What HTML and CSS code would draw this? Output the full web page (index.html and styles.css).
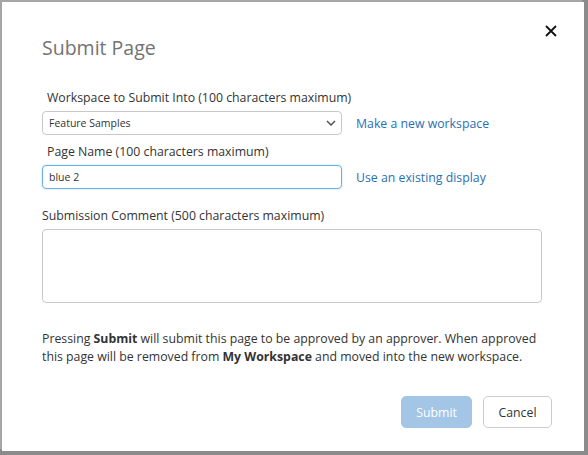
FILE: index.html
```html
<!DOCTYPE html>
<html>
<head>
<meta charset="utf-8">
<link rel="stylesheet" href="styles.css">
</head>
<body>
<div class="backdrop-text">| Location</div>
<div class="dialog">
  <button class="close" aria-label="Close">
    <svg width="12" height="12" viewBox="0 0 12 12"><path d="M1 1 L11 11 M11 1 L1 11" stroke="#111" stroke-width="1.8" fill="none"/></svg>
  </button>
  <h1 class="title">Submit Page</h1>

  <div class="field first">
    <div class="label indent">Workspace to Submit Into (100 characters maximum)</div>
    <div class="row">
      <div class="select">
        <span>Feature Samples</span>
        <svg width="10" height="6" viewBox="0 0 10 6"><path d="M1 1 L5 5 L9 1" stroke="#555" stroke-width="1.5" fill="none"/></svg>
      </div>
      <a class="link">Make a new workspace</a>
    </div>
  </div>

  <div class="field second">
    <div class="label indent">Page Name (100 characters maximum)</div>
    <div class="row">
      <div class="input focused">blue 2</div>
      <a class="link">Use an existing display</a>
    </div>
  </div>

  <div class="field comment">
    <div class="label">Submission Comment (500 characters maximum)</div>
    <div class="textarea"></div>
  </div>

  <p class="note">Pressing <b>Submit</b> will submit this page to be approved by an approver. When approved this page will be removed from <b>My Workspace</b> and moved into the new workspace.</p>

  <div class="actions">
    <button class="btn primary">Submit</button>
    <button class="btn">Cancel</button>
  </div>
</div>
</body>
</html>
```

FILE: styles.css
```css
html, body {
  margin: 0;
  padding: 0;
}
body {
  width: 588px;
  height: 455px;
  background: #8b8b8b;
  font-family: "Open Sans", "Noto Sans", sans-serif;
  color: #333;
  position: relative;
  overflow: hidden;
}
.backdrop-text {
  position: absolute;
  left: 4px;
  top: -11px;
  font-size: 13px;
  line-height: 13px;
  color: #444;
}
.dialog {
  position: absolute;
  left: 2px;
  top: 2px;
  width: 582px;
  height: 449px;
  background: #fff;
  box-sizing: border-box;
  padding: 0 40px;
  box-shadow: -2px -2px 0 #a6a6a6;
}
.close {
  position: absolute;
  right: 27px;
  top: 23px;
  border: 0;
  background: none;
  padding: 0;
  width: 12px;
  height: 12px;
  cursor: pointer;
}
.close svg { display: block; }
.title {
  margin: 0;
  padding-top: 32px;
  font-weight: 400;
  font-size: 19.5px;
  line-height: 27px;
  color: #737373;
}
.field { display: flex; flex-direction: column; }
.field.first { margin-top: 28px; }
.field.second { margin-top: 8px; }
.label {
  font-size: 12.3px;
  line-height: 18px;
  color: #333;
}
.indent { padding-left: 5px; }
.row {
  display: flex;
  align-items: center;
  gap: 14px;
  margin-top: 4px;
}
.select, .input {
  width: 300px;
  height: 24px;
  box-sizing: border-box;
  border: 1px solid #c8c8c8;
  border-radius: 4px;
  display: flex;
  align-items: center;
  justify-content: space-between;
  padding: 0 5px 0 6px;
  font-size: 10.5px;
  color: #333;
}
.input.focused {
  border-color: #66afe9;
  box-shadow: 0 0 2px rgba(102,175,233,0.5);
}
.link {
  font-size: 12.3px;
  color: #2a6fb4;
  cursor: pointer;
}
.comment { margin-top: 18px; }
.textarea {
  margin-top: 4px;
  width: 500px;
  height: 74px;
  box-sizing: border-box;
  border: 1px solid #c8c8c8;
  border-radius: 4px;
}
.note {
  margin: 27px 0 0;
  font-size: 12.3px;
  line-height: 18px;
  color: #333;
  width: 502px;
}
.note b { font-weight: 700; }
.actions {
  display: flex;
  justify-content: flex-end;
  gap: 11px;
  margin-top: 30px;
  margin-right: -8px;
}
.btn {
  height: 32px;
  padding: 0 14px;
  min-width: 69px;
  border-radius: 5px;
  border: 1px solid #ccc;
  background: #fff;
  font-family: inherit;
  font-size: 12.3px;
  color: #333;
}
.btn.primary {
  background: #a4c6e6;
  border-color: #a4c6e6;
  color: #fff;
  min-width: 70px;
}
```
